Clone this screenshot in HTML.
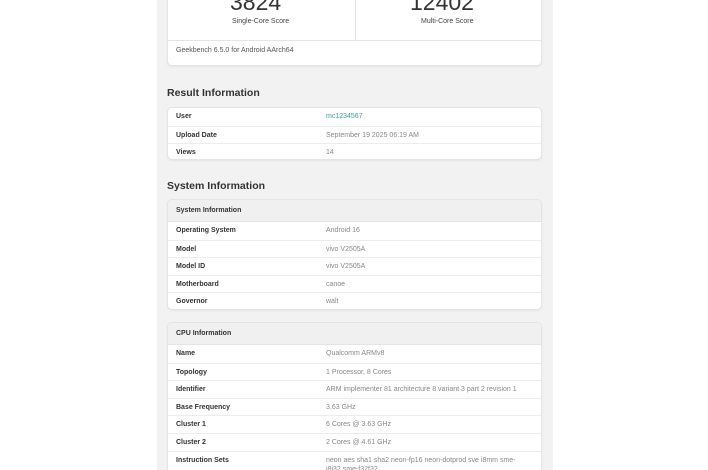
<!DOCTYPE html>
<html style="width:708px;height:470px;overflow:hidden"><head><style>
*{margin:0;padding:0;box-sizing:border-box}
body{width:708px;height:470px;overflow:hidden;background:#fff;font-family:"Liberation Sans",sans-serif;position:relative}
.col{position:absolute;left:157px;top:0;width:396px;height:470px;background:#f2f2f2}
.card{position:absolute;left:167px;width:375px;background:#fff;border:1px solid #e4e4e4;border-radius:5px;overflow:hidden;box-shadow:0 1px 2px rgba(0,0,0,.06)}
.h2{position:absolute;left:167px;font-size:10.5px;font-weight:bold;color:#333}
.row{height:17.6px;border-top:1px solid #ececec;font-size:7px;position:relative;line-height:17px}
.row:first-child{border-top:none}
.row b{position:absolute;left:8px;color:#333}
.row span{position:absolute;left:158px;color:#888}
.hd{height:22px;background:#f0f0f0;font-size:7px;font-weight:bold;color:#333;line-height:22px;padding-left:8px;border-bottom:1px solid #e4e4e4}
.big{position:absolute;font-size:23px;color:#333}
.lbl{position:absolute;font-size:7px;color:#444}
</style></head><body>
<div class="col"></div>
<div class="card" style="top:-6px;height:72px">
 <div style="position:absolute;left:187px;top:0;width:1px;height:45px;background:#e4e4e4"></div>
 <div style="position:absolute;left:0;top:45px;width:100%;height:1px;background:#e4e4e4"></div>
 <div class="big" style="left:62px;top:-6px">3824</div>
 <div class="lbl" style="left:64px;top:23px">Single-Core Score</div>
 <div class="big" style="left:242px;top:-6px">12402</div>
 <div class="lbl" style="left:253px;top:23px">Multi-Core Score</div>
 <div style="position:absolute;left:8px;top:52px;font-size:7px;color:#555">Geekbench 6.5.0 for Android AArch64</div>
</div>
<div class="h2" style="top:87px">Result Information</div>
<div class="card" style="top:107px;height:53px">
 <div class="row"><b>User</b><span style="color:#3a9aa8">mc1234567</span></div>
 <div class="row"><b>Upload Date</b><span>September 19 2025 06:19 AM</span></div>
 <div class="row"><b>Views</b><span>14</span></div>
</div>
<div class="h2" style="top:180px">System Information</div>
<div class="card" style="top:199px;height:111px">
 <div class="hd">System Information</div>
 <div class="row" style="border-top:none"><b>Operating System</b><span>Android 16</span></div>
 <div class="row"><b>Model</b><span>vivo V2505A</span></div>
 <div class="row"><b>Model ID</b><span>vivo V2505A</span></div>
 <div class="row"><b>Motherboard</b><span>canoe</span></div>
 <div class="row"><b>Governor</b><span>walt</span></div>
</div>
<div class="card" style="top:322px;height:160px">
 <div class="hd">CPU Information</div>
 <div class="row" style="border-top:none"><b>Name</b><span>Qualcomm ARMv8</span></div>
 <div class="row"><b>Topology</b><span>1 Processor, 8 Cores</span></div>
 <div class="row"><b>Identifier</b><span>ARM implementer 81 architecture 8 variant 3 part 2 revision 1</span></div>
 <div class="row"><b>Base Frequency</b><span>3.63 GHz</span></div>
 <div class="row"><b>Cluster 1</b><span>6 Cores @ 3.63 GHz</span></div>
 <div class="row"><b>Cluster 2</b><span>2 Cores @ 4.61 GHz</span></div>
 <div class="row" style="height:30px"><b>Instruction Sets</b><span style="line-height:9px;top:4px;width:200px">neon aes sha1 sha2 neon-fp16 neon-dotprod sve i8mm sme-i8i32 sme-f32f32</span></div>
</div>
</body></html>
